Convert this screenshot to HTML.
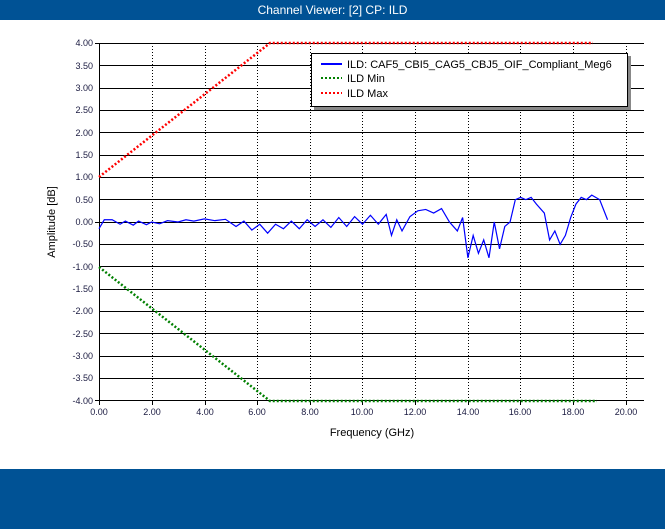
<!DOCTYPE html>
<html><head><meta charset="utf-8"><style>
html,body{margin:0;padding:0;width:665px;height:529px;overflow:hidden;background:#fff;font-family:"Liberation Sans",sans-serif;}
.top{position:absolute;left:0;top:0;width:665px;height:20px;background:#005295;color:#fff;font-size:12px;text-align:center;line-height:20px;}
.bot{position:absolute;left:0;top:469px;width:665px;height:60px;background:#005295;}
svg{position:absolute;left:0;top:0;}
</style></head><body>
<div class="top">Channel Viewer: [2] CP: ILD</div>
<svg width="665" height="529" font-family="Liberation Sans, sans-serif">
<g stroke="#000" stroke-width="1" shape-rendering="crispEdges">
<line x1="99" y1="43.5" x2="644" y2="43.5"/><line x1="99" y1="65.5" x2="644" y2="65.5"/><line x1="99" y1="88.5" x2="644" y2="88.5"/><line x1="99" y1="110.5" x2="644" y2="110.5"/><line x1="99" y1="132.5" x2="644" y2="132.5"/><line x1="99" y1="155.5" x2="644" y2="155.5"/><line x1="99" y1="177.5" x2="644" y2="177.5"/><line x1="99" y1="199.5" x2="644" y2="199.5"/><line x1="99" y1="222.5" x2="644" y2="222.5"/><line x1="99" y1="244.5" x2="644" y2="244.5"/><line x1="99" y1="266.5" x2="644" y2="266.5"/><line x1="99" y1="289.5" x2="644" y2="289.5"/><line x1="99" y1="311.5" x2="644" y2="311.5"/><line x1="99" y1="333.5" x2="644" y2="333.5"/><line x1="99" y1="356.5" x2="644" y2="356.5"/><line x1="99" y1="378.5" x2="644" y2="378.5"/><line x1="99" y1="400.5" x2="644" y2="400.5"/>
<line x1="99.5" y1="43" x2="99.5" y2="405"/>
</g>
<g stroke="#000" stroke-dasharray="1,2" shape-rendering="crispEdges">
<line x1="152.5" y1="43" x2="152.5" y2="401"/><line x1="205.5" y1="43" x2="205.5" y2="401"/><line x1="257.5" y1="43" x2="257.5" y2="401"/><line x1="310.5" y1="43" x2="310.5" y2="401"/><line x1="362.5" y1="43" x2="362.5" y2="401"/><line x1="415.5" y1="43" x2="415.5" y2="401"/><line x1="468.5" y1="43" x2="468.5" y2="401"/><line x1="520.5" y1="43" x2="520.5" y2="401"/><line x1="573.5" y1="43" x2="573.5" y2="401"/><line x1="626.5" y1="43" x2="626.5" y2="401"/>
</g>
<g stroke="#000" shape-rendering="crispEdges">
<line x1="95" y1="43.5" x2="99" y2="43.5"/><line x1="95" y1="222.5" x2="99" y2="222.5"/><line x1="95" y1="400.5" x2="99" y2="400.5"/>
<line x1="152.5" y1="401" x2="152.5" y2="405"/><line x1="205.5" y1="401" x2="205.5" y2="405"/><line x1="257.5" y1="401" x2="257.5" y2="405"/><line x1="310.5" y1="401" x2="310.5" y2="405"/><line x1="362.5" y1="401" x2="362.5" y2="405"/><line x1="415.5" y1="401" x2="415.5" y2="405"/><line x1="468.5" y1="401" x2="468.5" y2="405"/><line x1="520.5" y1="401" x2="520.5" y2="405"/><line x1="573.5" y1="401" x2="573.5" y2="405"/><line x1="626.5" y1="401" x2="626.5" y2="405"/>
</g>
<polyline points="99,177 270,43 593,43" fill="none" stroke="#ff0000" stroke-width="2.5" stroke-dasharray="2,2"/>
<polyline points="99,267 270,401 597,401" fill="none" stroke="#008000" stroke-width="2.5" stroke-dasharray="2,2"/>
<g transform="translate(99,222) scale(26.35,-44.75)">
<polyline vector-effect="non-scaling-stroke" fill="none" stroke="#0000ff" stroke-width="1.2" points="0,-0.15 0.2,0.05 0.5,0.05 0.8,-0.05 1.0,0.02 1.3,-0.07 1.5,0.02 1.8,-0.06 2.0,0.0 2.3,-0.04 2.6,0.03 3.0,0.0 3.3,0.05 3.6,0.02 4.0,0.07 4.4,0.03 4.8,0.06 5.2,-0.1 5.5,0.02 5.8,-0.18 6.1,-0.05 6.4,-0.25 6.7,-0.05 7.0,-0.15 7.3,0.02 7.6,-0.15 7.9,0.05 8.2,-0.1 8.5,0.05 8.8,-0.12 9.1,0.1 9.4,-0.1 9.7,0.12 10.0,-0.05 10.3,0.15 10.6,-0.05 10.9,0.17 11.1,-0.3 11.3,0.05 11.5,-0.2 11.8,0.12 12.1,0.25 12.4,0.28 12.7,0.2 13.0,0.3 13.3,0.0 13.6,-0.2 13.8,0.1 14.0,-0.8 14.2,-0.3 14.4,-0.7 14.6,-0.4 14.8,-0.8 15.0,0.0 15.2,-0.6 15.4,-0.1 15.6,0.0 15.8,0.5 16.0,0.55 16.2,0.5 16.4,0.55 16.6,0.4 16.9,0.2 17.1,-0.4 17.3,-0.2 17.5,-0.5 17.7,-0.3 17.9,0.1 18.1,0.4 18.3,0.55 18.5,0.5 18.7,0.6 19.0,0.5 19.3,0.05"/>
</g>
<rect x="314" y="56" width="317" height="54" fill="#888"/>
<rect x="311.5" y="53.5" width="316" height="53" fill="#fff" stroke="#000"/>
<line x1="321" y1="64" x2="342" y2="64" stroke="#0000ff" stroke-width="2"/>
<line x1="321" y1="78" x2="342" y2="78" stroke="#008000" stroke-width="2" stroke-dasharray="2,2"/>
<line x1="321" y1="93" x2="342" y2="93" stroke="#ff0000" stroke-width="2" stroke-dasharray="2,2"/>
<g font-size="11" fill="#000">
<text x="347" y="68">ILD: CAF5_CBI5_CAG5_CBJ5_OIF_Compliant_Meg6</text>
<text x="347" y="82">ILD Min</text>
<text x="347" y="97">ILD Max</text>
</g>
<g font-size="9" fill="#1a1a40" text-anchor="end">
<text x="93" y="46">4.00</text><text x="93" y="69">3.50</text><text x="93" y="91">3.00</text><text x="93" y="113">2.50</text><text x="93" y="136">2.00</text><text x="93" y="158">1.50</text><text x="93" y="180">1.00</text><text x="93" y="203">0.50</text><text x="93" y="225">0.00</text><text x="93" y="247">-0.50</text><text x="93" y="270">-1.00</text><text x="93" y="292">-1.50</text><text x="93" y="314">-2.00</text><text x="93" y="337">-2.50</text><text x="93" y="359">-3.00</text><text x="93" y="381">-3.50</text><text x="93" y="404">-4.00</text>
</g>
<g font-size="9" fill="#1a1a40" text-anchor="middle">
<text x="99" y="415">0.00</text><text x="152" y="415">2.00</text><text x="205" y="415">4.00</text><text x="257" y="415">6.00</text><text x="310" y="415">8.00</text><text x="362" y="415">10.00</text><text x="415" y="415">12.00</text><text x="468" y="415">14.00</text><text x="520" y="415">16.00</text><text x="573" y="415">18.00</text><text x="626" y="415">20.00</text>
</g>
<text x="372" y="436" font-size="11" text-anchor="middle" fill="#000">Frequency (GHz)</text>
<text transform="translate(55,222) rotate(-90)" font-size="11" text-anchor="middle" fill="#000">Amplitude [dB]</text>
</svg>
<div class="bot"></div>
</body></html>
